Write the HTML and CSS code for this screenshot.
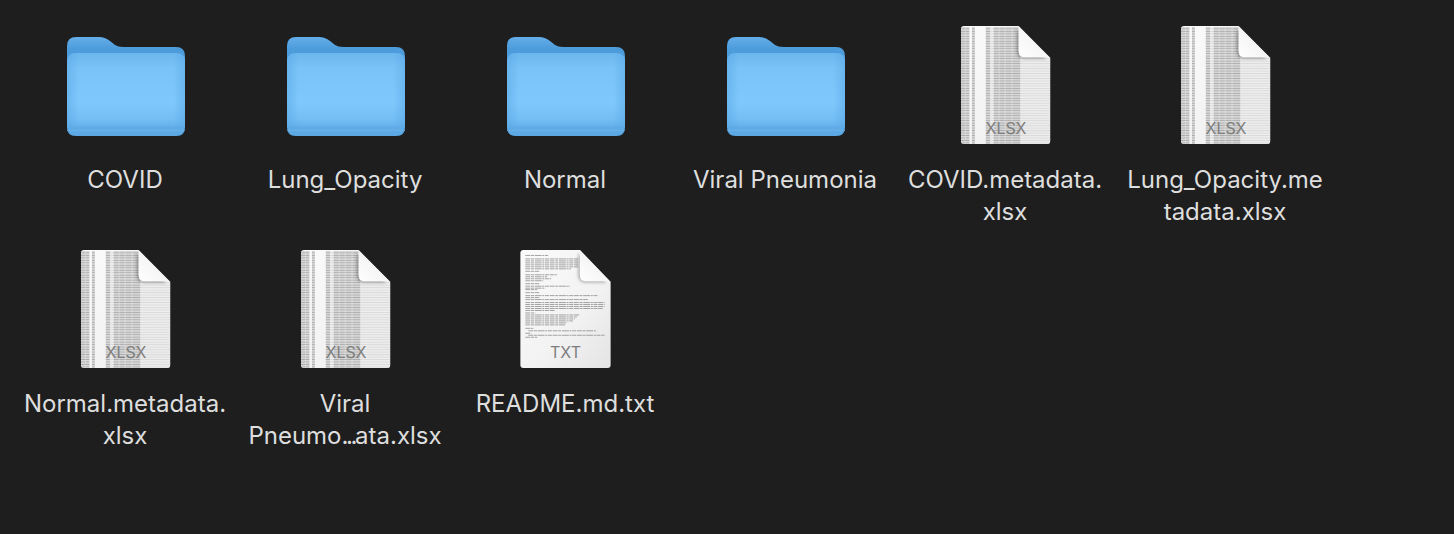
FILE: index.html
```html
<!DOCTYPE html>
<html lang="en">
<head>
<meta charset="utf-8">
<title>Folder</title>
<link rel="stylesheet" href="styles.css">
</head>
<body>
<svg class="defs" aria-hidden="true">
  <defs>
    <linearGradient id="backGrad" x1="0" y1="0" x2="0" y2="1">
      <stop offset="0" stop-color="#64aeea"/>
      <stop offset="0.2" stop-color="#4c9bda"/>
      <stop offset="1" stop-color="#4a9ad8"/>
    </linearGradient>
    <linearGradient id="frontGrad" x1="0" y1="0" x2="0" y2="1">
      <stop offset="0" stop-color="#6cb6ee"/>
      <stop offset="0.18" stop-color="#7ac3f8"/>
      <stop offset="0.6" stop-color="#7fc8fc"/>
      <stop offset="0.8" stop-color="#74bef5"/>
      <stop offset="0.87" stop-color="#68b3ec"/>
      <stop offset="0.885" stop-color="#62ade8"/>
      <stop offset="1" stop-color="#5aa6e2"/>
    </linearGradient>
    <linearGradient id="frontEdges" x1="0" y1="0" x2="1" y2="0">
      <stop offset="0" stop-color="#5aa8e6" stop-opacity="0.55"/>
      <stop offset="0.1" stop-color="#5aa8e6" stop-opacity="0"/>
      <stop offset="0.9" stop-color="#5aa8e6" stop-opacity="0"/>
      <stop offset="1" stop-color="#5aa8e6" stop-opacity="0.55"/>
    </linearGradient>
    <linearGradient id="sheetFade" x1="0" y1="0" x2="1" y2="1">
      <stop offset="0" stop-color="#fbfbfb"/>
      <stop offset="0.6" stop-color="#f2f2f2"/>
      <stop offset="1" stop-color="#e4e4e4"/>
    </linearGradient>
    <linearGradient id="foldGrad" x1="0" y1="1" x2="1" y2="0">
      <stop offset="0" stop-color="#ffffff"/>
      <stop offset="0.45" stop-color="#f6f6f6"/>
      <stop offset="0.8" stop-color="#e2e2e2"/>
      <stop offset="1" stop-color="#cfcfcf"/>
    </linearGradient>
    <pattern id="rows" width="4" height="2.5" patternUnits="userSpaceOnUse">
      <rect width="4" height="1.1" fill="#acacac"/>
      <rect y="1.1" width="4" height="1.4" fill="#d4d4d4"/>
    </pattern>
    <pattern id="rowsLight" width="4" height="2.5" patternUnits="userSpaceOnUse">
      <rect width="4" height="1.1" fill="#dadada"/>
      <rect y="1.1" width="4" height="1.4" fill="#eeeeee"/>
    </pattern>
    <filter id="soft" x="-5%" y="-5%" width="110%" height="110%">
      <feGaussianBlur stdDeviation="0.35"/>
    </filter>
    <filter id="softer" x="-30%" y="-30%" width="160%" height="160%">
      <feGaussianBlur stdDeviation="1.4"/>
    </filter>
    <symbol id="folder" viewBox="0 0 118 100">
      <path d="M0 9 Q0 0 9 0 H32 Q38 0 43 4 L48 8 Q51 10 56 10 H109 Q118 10 118 19 V60 H0Z" fill="url(#backGrad)"/>
      <path d="M0 25 Q0 16 9 16 H109 Q118 16 118 25 V90 Q118 99 109 99 H9 Q0 99 0 90Z" fill="url(#frontGrad)"/>
      <path d="M0 25 Q0 16 9 16 H109 Q118 16 118 25 V90 Q118 99 109 99 H9 Q0 99 0 90Z" fill="url(#frontEdges)"/>
      <rect x="0" y="93" width="118" height="1" fill="#7fc0f2" opacity="0.35"/>
    </symbol>
    <symbol id="sheet" viewBox="0 0 90 119" preserveAspectRatio="xMinYMid meet">
      <clipPath id="sheetClip">
        <path d="M3 0 H58 L90 32 V116 Q90 119 87 119 H3 Q0 119 0 116 V3 Q0 0 3 0Z"/>
      </clipPath>
      <path d="M3 0 H58 L90 32 V116 Q90 119 87 119 H3 Q0 119 0 116 V3 Q0 0 3 0Z" fill="url(#sheetFade)"/>
      <g clip-path="url(#sheetClip)">
        <g filter="url(#soft)">
          <rect x="0" y="1" width="8.500" height="118" fill="url(#rows)"/>
          <rect x="11" y="1" width="3" height="118" fill="url(#rows)"/>
          <rect x="25" y="1" width="4.500" height="118" fill="url(#rows)"/>
          <rect x="29.500" y="1" width="4" height="118" fill="url(#rowsLight)"/>
          <rect x="33" y="1" width="27" height="118" fill="url(#rows)"/>
          <rect x="60" y="32" width="30" height="87" fill="url(#rowsLight)"/>
          <rect x="38" y="1" width="1" height="118" fill="#fff" opacity="0.3"/>
          <rect x="44" y="1" width="1" height="118" fill="#fff" opacity="0.3"/>
          <rect x="51" y="1" width="1" height="118" fill="#fff" opacity="0.3"/>
          <rect x="4" y="1" width="1" height="118" fill="#fff" opacity="0.25"/>
        </g>
        <path d="M56 3 L86 33 H64 Q56 33 56 25Z" fill="#000" opacity="0.28" filter="url(#softer)"/>
      </g>
      <path d="M58 0 L89 31.500 H64 Q58 31.500 58 25Z" fill="url(#foldGrad)"/>
    </symbol>
    <symbol id="text-page" viewBox="0 0 91 119">
      <clipPath id="textClip">
        <path d="M3 0 H60 L91 32 V116 Q91 119 88 119 H3 Q0 119 0 116 V3 Q0 0 3 0Z"/>
      </clipPath>
      <path d="M3 0 H60 L91 32 V116 Q91 119 88 119 H3 Q0 119 0 116 V3 Q0 0 3 0Z" fill="url(#sheetFade)"/>
      <path filter="url(#soft)" fill="none" stroke="#8c8c8c" stroke-width="0.8" stroke-dasharray="5 0.7 3 0.7 7 0.7 2 0.7 4 0.7"
        d="M5 5.500h23
           M5 9h53 M5 11h53 M5 13h53 M5 15h53 M5 17h53 M5 19h46
           M5 21.500h14
           M5 25h32 M5 27h22 M5 29h26 M5 31h18
           M5 34h14
           M5 36.500h45 M5 38.500h20 M5 40h12
           M5 43h14
           M5 46h73
           M5 48h14 M5 50h63
           M5 53h80 M5 55h80 M5 57h80 M5 59h78 M5 61h30
           M5 63.500h10
           M5 65.500h55 M5 67.500h52 M5 69.500h50 M5 71.500h48 M5 73.500h42 M5 75.500h40
           M5 79h8
           M8 81.500h69
           M5 84h6
           M8 86h77 M5 88h12"/>
      <g clip-path="url(#textClip)">
        <path d="M58 3 L87 33 H66 Q58 33 58 25Z" fill="#000" opacity="0.25" filter="url(#softer)"/>
      </g>
      <path d="M60 0 L90 31.500 H66 Q60 31.500 60 25Z" fill="url(#foldGrad)"/>
    </symbol>
  </defs>
</svg>

<main class="grid">
  <div class="item">
    <div class="icon"><svg class="folder"><use href="#folder"/></svg></div>
    <p class="label">COVID</p>
  </div>
  <div class="item">
    <div class="icon"><svg class="folder"><use href="#folder"/></svg></div>
    <p class="label">Lung_Opacity</p>
  </div>
  <div class="item">
    <div class="icon"><svg class="folder"><use href="#folder"/></svg></div>
    <p class="label">Normal</p>
  </div>
  <div class="item">
    <div class="icon"><svg class="folder"><use href="#folder"/></svg></div>
    <p class="label">Viral Pneumonia</p>
  </div>
  <div class="item">
    <div class="icon"><div class="file"><svg class="page"><use href="#sheet"/></svg><span class="badge">XLSX</span></div></div>
    <p class="label">COVID.metadata.<br>xlsx</p>
  </div>
  <div class="item">
    <div class="icon"><div class="file"><svg class="page"><use href="#sheet"/></svg><span class="badge">XLSX</span></div></div>
    <p class="label">Lung_Opacity.me<br>tadata.xlsx</p>
  </div>
  <div class="item">
    <div class="icon"><div class="file"><svg class="page"><use href="#sheet"/></svg><span class="badge">XLSX</span></div></div>
    <p class="label">Normal.metadata.<br>xlsx</p>
  </div>
  <div class="item">
    <div class="icon"><div class="file"><svg class="page"><use href="#sheet"/></svg><span class="badge">XLSX</span></div></div>
    <p class="label">Viral<br>Pneumo<span class="dots">...</span>ata.xlsx</p>
  </div>
  <div class="item">
    <div class="icon"><div class="file file-txt"><svg class="page"><use href="#text-page"/></svg><span class="badge">TXT</span></div></div>
    <p class="label">README.md.txt</p>
  </div>
</main>
</body>
</html>
```
FILE: styles.css
```css
* { box-sizing: border-box; }
html, body { margin: 0; height: 100%; }
body {
  background: #1e1e1e;
  overflow: hidden;
  font-family: Inter, "Liberation Sans", sans-serif;
}
.defs { display: block; width: 0; height: 0; }
.grid {
  display: grid;
  grid-template-columns: repeat(6, 220px);
  grid-auto-rows: 224px;
  padding: 26px 0 0 15px;
}
.item {
  display: flex;
  flex-direction: column;
  align-items: center;
}
.icon {
  height: 118px;
  margin-left: 2px;
  display: flex;
  align-items: center;
  justify-content: center;
}
.folder { width: 118px; height: 100px; display: block; margin-top: 3px; }
.file { position: relative; width: 90px; height: 118px; }
.file-txt { width: 91px; margin-left: -1px; }
.page { width: 100%; height: 100%; display: block; }
.badge {
  position: absolute;
  left: 0;
  right: 0;
  bottom: 7px;
  text-align: center;
  font-size: 16px;
  line-height: 18px;
  color: #7e7e7e;
}
.label {
  margin: 20px 0 0;
  width: 210px;
  text-align: center;
  font-size: 24px;
  line-height: 32px;
  color: #dedede;
  white-space: nowrap;
}
.dots { letter-spacing: -2.400px; }
```
